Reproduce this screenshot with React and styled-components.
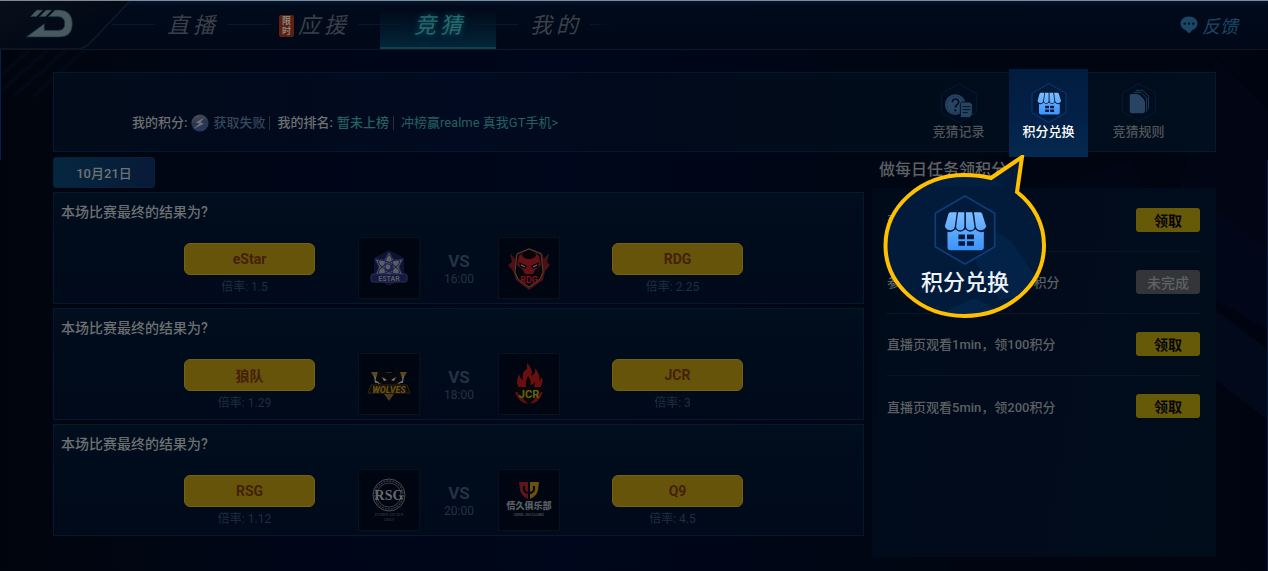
import React, { useState } from 'react';
import styled, { createGlobalStyle } from "styled-components";

const matches = [
    { id: 1, time: "16:00", home: "eStar", homeOdds: "1.5", away: "RDG", awayOdds: "2.25", homeLogo: EstarLogo, awayLogo: RdgLogo },
    { id: 2, time: "18:00", home: "狼队", homeOdds: "1.29", away: "JCR", awayOdds: "3", homeLogo: WolvesLogo, awayLogo: JcrLogo },
    { id: 3, time: "20:00", home: "RSG", homeOdds: "1.12", away: "Q9", awayOdds: "4.5", homeLogo: RsgLogo, awayLogo: QjLogo },
];

const tasks = [
    { id: 1, text: "登录领积分", done: true },
    { id: 2, text: "参与任意1次竞猜，领100积分", done: false },
    { id: 3, text: "直播页观看1min，领100积分", done: true },
    { id: 4, text: "直播页观看5min，领200积分", done: true },
];

const tabs = [
    { name: "直播" },
    { name: "应援", limited: true },
    { name: "竞猜" },
    { name: "我的" },
];

export default function App() {
    const [currentTab, setCurrentTab] = useState("竞猜");

    return <>
        <GlobalStyle />
        <Page>
            <Backdrop />
            <Header>
                <Brand href="#home" aria-label="首页">
                    <BrandLogo />
                </Brand>
                <Tabs>
                    {tabs.map((tab) => (
                        <Tab
                            key={tab.name}
                            $active={tab.name === currentTab}
                            onClick={() => setCurrentTab(tab.name)}
                        >
                            <TabLabel>
                                {tab.limited && <Limited><span>限</span><span>时</span></Limited>}
                                <span className="name">{tab.name}</span>
                            </TabLabel>
                        </Tab>
                    ))}
                </Tabs>
                <Feedback>
                    <FeedbackIcon />
                    反馈
                </Feedback>
            </Header>

            <Main>
                <Summary>
                    <Stats>
                        <span>我的积分:</span>
                        <PointsIcon />
                        <Muted>获取失败</Muted>
                        <Divider />
                        <span>我的排名:</span>
                        <Rank>暂未上榜</Rank>
                        <Divider />
                        <RankLink href="#rank">冲榜赢realme 真我GT手机&gt;</RankLink>
                    </Stats>
                    <QuickMenu>
                        <QuickItem>
                            <QuickButton><RecordIcon />竞猜记录</QuickButton>
                        </QuickItem>
                        <QuickItem>
                            <QuickButton $active><ShopIcon width="36" height="40" />积分兑换</QuickButton>
                            <Callout>
                                <CalloutShape />
                                <ShopIcon width="62" height="70" />
                                <span>积分兑换</span>
                            </Callout>
                        </QuickItem>
                        <QuickItem>
                            <QuickButton><RulesIcon />竞猜规则</QuickButton>
                        </QuickItem>
                    </QuickMenu>
                </Summary>

                <Columns>
                    <Schedule>
                        <DateTab>10月21日</DateTab>
                        {matches.map((match) => (
                            <MatchCard key={match.id}>
                                <h3>本场比赛最终的结果为?</h3>
                                <MatchBody>
                                    <Choice>
                                        <Bet>{match.home}</Bet>
                                        <Odds>倍率: {match.homeOdds}</Odds>
                                    </Choice>
                                    <TeamLogo><match.homeLogo /></TeamLogo>
                                    <Versus>
                                        <strong>VS</strong>
                                        <span>{match.time}</span>
                                    </Versus>
                                    <TeamLogo><match.awayLogo /></TeamLogo>
                                    <Choice>
                                        <Bet>{match.away}</Bet>
                                        <Odds>倍率: {match.awayOdds}</Odds>
                                    </Choice>
                                </MatchBody>
                            </MatchCard>
                        ))}
                    </Schedule>

                    <Daily>
                        <h2>做每日任务领积分</h2>
                        <TaskList>
                            {tasks.map((task) => (
                                <Task key={task.id}>
                                    <span>{task.text}</span>
                                    <Claim $done={task.done} disabled={!task.done}>
                                        {task.done ? "领取" : "未完成"}
                                    </Claim>
                                </Task>
                            ))}
                        </TaskList>
                    </Daily>
                </Columns>
            </Main>
        </Page>
    </>
}

function Backdrop() {
    return (
        <BackdropSvg viewBox="0 0 1268 571" preserveAspectRatio="none" aria-hidden="true">
            <g fill="#0a2a66">
                <path d="M1216 60 L1268 110 V250 L1180 180 Z" opacity="0.05" />
                <path d="M1180 180 L1268 250 V330 L1216 300 Z" opacity="0.1" />
                <path d="M1216 310 L1268 350 V420 L1216 380 Z" opacity="0.14" />
                <path d="M1040 190 L1130 160 L1180 260 L1100 300 Z" opacity="0.05" />
                <path d="M940 80 L1010 150 L920 250 Z" opacity="0.05" />
            </g>
            <g stroke="#0a2f5c" strokeWidth="4" opacity="0.1">
                <path d="M0 76 L30 50" />
                <path d="M0 92 L48 50" />
                <path d="M14 96 L66 50" />
                <path d="M34 96 L84 50" />
            </g>
            <path d="M0 2 V160" stroke="#04204a" strokeWidth="2" />
            <path d="M1268 160 V571" stroke="#031d4d" strokeWidth="2" />
        </BackdropSvg>
    )
}

function BrandLogo() {
    return (
        <svg width="132" height="50" viewBox="0 0 132 50" aria-hidden="true">
            <defs>
                <linearGradient id="brandBg" x1="0" y1="0" x2="1" y2="1">
                    <stop offset="0" stopColor="#090f1a" />
                    <stop offset="0.6" stopColor="#020916" />
                </linearGradient>
            </defs>
            <path d="M0 0 H130 L90 42 Q84 49 76 49 H0 Z" fill="url(#brandBg)" />
            <path d="M130 0 L90 42 Q84 48 76 48 H0" fill="none" stroke="#101a26" strokeWidth="1.5" />
            <g transform="scale(0.3333)" fill="#4a5860" stroke="#0d3442" strokeWidth="2">
                <path d="M110 27 H129 L109 47 H91 Z" />
                <path d="M138 27 H156 L136 47 H118 Z" />
                <path d="M165 27 H178 Q217 29 217 68 Q217 108 178 108 H79 L133 68 V88 H176 Q194 87 194 68 Q194 48 176 47 H145 Z" />
            </g>
        </svg>
    )
}

function FeedbackIcon() {
    return (
        <svg width="18" height="18" viewBox="0 0 18 18" aria-hidden="true">
            <path d="M9 0.5 C14 0.5 17.5 3.5 17.5 7.5 C17.5 11 15 13 12.5 14 L9 17.5 L5.5 14 C3 13 0.5 11 0.5 7.5 C0.5 3.5 4 0.5 9 0.5 Z" fill="#1b4766" />
            <g fill="#020a18">
                <circle cx="4.8" cy="7.6" r="1.2" />
                <circle cx="9" cy="7.6" r="1.2" />
                <circle cx="13.2" cy="7.6" r="1.2" />
            </g>
        </svg>
    )
}

function PointsIcon() {
    return (
        <svg width="18" height="18" viewBox="0 0 18 18" aria-hidden="true">
            <defs>
                <linearGradient id="points" x1="0.3" y1="0" x2="0.6" y2="1">
                    <stop offset="0" stopColor="#4c4f56" />
                    <stop offset="0.5" stopColor="#2a364f" />
                    <stop offset="1" stopColor="#253861" />
                </linearGradient>
            </defs>
            <circle cx="9" cy="9" r="8.6" fill="url(#points)" />
            <path d="M13.5 3.5 L4.5 8.5 L8.5 9.5 L2 15 L13 9.8 L9.5 8.6 Z" fill="#6f7379" />
        </svg>
    )
}

function ShopIcon({ width, height }) {
    return (
        <svg width={width} height={height} viewBox="0 0 186 212" aria-hidden="true">
            <defs>
                <linearGradient id="shop" gradientUnits="userSpaceOnUse" x1="0" y1="52" x2="0" y2="167">
                    <stop offset="0" stopColor="#7dbdff" />
                    <stop offset="1" stopColor="#3b94fb" />
                </linearGradient>
            </defs>
            <path d="M93 3 L183 55 V157 L93 209 L3 157 V55 Z" fill="#021a3c" stroke="#0f3d77" strokeWidth="5" />
            <g fill="url(#shop)">
                <path d="M49 52 H68 L62 97 Q58 108 47 107 Q35 106 32 95 L43 57 Q45 52 49 52 Z" />
                <path d="M72 52 H91 V97 Q88 108 78 107 Q68 107 66 97 Z" />
                <path d="M96 52 H115 L122 97 Q120 107 110 107 Q99 108 96 97 Z" />
                <path d="M120 52 H139 Q143 52 145 57 L157 95 Q154 106 142 107 Q130 108 126 97 Z" />
                <path fillRule="evenodd" d="M40 111 Q54 116 64 104 Q78 119 94 104 Q109 119 124 104 Q134 116 150 111 V158 Q150 167 141 167 H49 Q40 167 40 158 Z M73 120 V134 H93 V120 Z M99 120 V134 H120 V120 Z M73 140 V154 H93 V140 Z M99 140 V154 H120 V140 Z" />
            </g>
        </svg>
    )
}

function RecordIcon() {
    return (
        <svg width="36" height="40" viewBox="0 0 108 120" aria-hidden="true">
            <path d="M54 2 L106 32 V90 L54 119 L2 90 V32 Z" fill="#010d1e" stroke="#061b30" strokeWidth="3" />
            <circle cx="43" cy="65" r="31" fill="#274562" />
            <circle cx="43" cy="65" r="26" fill="none" stroke="#152f4c" strokeWidth="2" />
            <path d="M34 58 Q34 48 43 48 Q53 48 53 57 Q53 62 47 66 Q43 69 43 74" fill="none" stroke="#041021" strokeWidth="5" />
            <circle cx="43" cy="82" r="3.5" fill="#041021" />
            <path d="M62 57 H87 L94 64 V94 L86 104 H58 V62 Z" fill="#274562" stroke="#041021" strokeWidth="3" />
            <path d="M65 71 H88 M65 80 H88 M65 89 H80" stroke="#041021" strokeWidth="3" />
        </svg>
    )
}

function RulesIcon() {
    return (
        <svg width="36" height="40" viewBox="0 0 108 120" aria-hidden="true">
            <path d="M54 2 L104 30 V86 L54 114 L4 86 V30 Z" fill="#010d1e" stroke="#061b30" strokeWidth="3" />
            <path d="M32 33 H50 L72 55 V84 Q72 91 65 91 H32 Q26 91 26 84 V39 Q26 33 32 33 Z" fill="#274562" />
            <path d="M54 34 L71 51 H54 Z" fill="#274562" />
            <path d="M38 28 H60 L77 45 V86 M44 22 H65 L83 40 V78" fill="none" stroke="#1f3b58" strokeWidth="3" />
        </svg>
    )
}

function CalloutShape() {
    return (
        <svg className="shape" width="164" height="164" viewBox="883 155 164 164" aria-hidden="true">
            <defs>
                <clipPath id="bubble">
                    <ellipse cx="964.5" cy="245.5" rx="79" ry="70.5" />
                </clipPath>
            </defs>
            <path
                d="M991 178 L1022 157 L1017 192 C1034 205 1044 224 1044 245.5 C1044 284.5 1008.5 316 964.5 316 C921 316 885.5 284.5 885.5 245.5 C885.5 206.5 921 175 964.5 175 C974 175 983 176 991 178 Z"
                fill="#021b3b"
            />
            <g clipPath="url(#bubble)">
                <path d="M985 225 L1010 240 L1045 290 L1000 300 L975 262 Z" fill="#04305f" opacity="0.35" />
                <path d="M930 318 L975 298 L1010 318 Z" fill="#04305f" opacity="0.4" />
                <path d="M885 175 H1045 V186 H885 Z" fill="#03234c" opacity="0.4" />
            </g>
            <path
                d="M991 178 L1022 157 L1017 192 C1034 205 1044 224 1044 245.5 C1044 284.5 1008.5 316 964.5 316 C921 316 885.5 284.5 885.5 245.5 C885.5 206.5 921 175 964.5 175 C974 175 983 176 991 178 Z"
                fill="none" stroke="#ffc000" strokeWidth="4"
            />
        </svg>
    )
}

function EstarLogo() {
    return (
        <svg width="60" height="60" viewBox="0 0 60 60" role="img" aria-label="eStar">
            <path d="M30 12 L45 20 V40 L30 48 L15 40 V20 Z" fill="#0e1430" />
            <path d="M30 14 L35 22 L44 21 L40 29 L44 38 L35 37 L30 45 L25 37 L16 38 L20 29 L16 21 L25 22 Z" fill="#5c5e64" stroke="#1b2350" />
            <ellipse cx="30" cy="29" rx="4" ry="12" fill="none" stroke="#1b2350" />
            <ellipse cx="30" cy="29" rx="4" ry="12" fill="none" stroke="#1b2350" transform="rotate(60 30 29)" />
            <ellipse cx="30" cy="29" rx="4" ry="12" fill="none" stroke="#1b2350" transform="rotate(-60 30 29)" />
            <circle cx="30" cy="30" r="4" fill="#1b2350" />
            <circle cx="29" cy="29" r="2.4" fill="#5c5e64" />
            <rect x="12" y="36" width="36" height="8" rx="2" fill="#121a40" stroke="#2c3150" />
            <text x="30" y="43" textAnchor="middle" fontFamily="Roboto, sans-serif" fontSize="7" fontWeight="700" fill="#5c5e66">ESTAR</text>
        </svg>
    )
}

function RdgLogo() {
    return (
        <svg width="60" height="60" viewBox="0 0 60 60" role="img" aria-label="RDG">
            <path d="M30 10 L43 15 L45 21 L50 15 L48 24 L51 27 L46 33 L44 42 L30 52 L17 42 L14 33 L9 27 L13 24 L11 15 L16 21 L18 15 Z" fill="#4d1016" />
            <path d="M30 11 L42 16 L44 34 L41 41 L30 49 L19 41 L16 34 L18 16 Z" fill="#08060a" stroke="#4f4530" />
            <path d="M20 18 Q30 8 40 18 L42 27 L36 32 L34 36 H26 L24 32 L18 27 Z" fill="#651118" />
            <ellipse cx="30" cy="17" rx="7" ry="4" fill="#050308" />
            <path d="M20 24 L28 28 L26 31 L21 29 Z M40 24 L32 28 L34 31 L39 29 Z" fill="#050308" />
            <path d="M22 27 L26 29 M38 27 L34 29" stroke="#8a8480" />
            <text x="30" y="45" textAnchor="middle" fontFamily="Roboto, sans-serif" fontSize="9" fontWeight="700" fill="#7c151d">RDG</text>
        </svg>
    )
}

function WolvesLogo() {
    return (
        <svg width="60" height="60" viewBox="0 0 60 60" role="img" aria-label="狼队">
            <path d="M12 18 H48 L41 30 H19 Z" fill="#5d4722" />
            <path d="M15 21 L21 29 H16 Z M45 21 L39 29 H44 Z" fill="#6c6e70" />
            <path d="M21 13 L27 19 H33 L39 13 L43 26 L37 30 H23 L17 26 Z" fill="#07080c" stroke="#07080c" />
            <path d="M23 23 L28 26 L25 27 Z M37 23 L32 26 L35 27 Z" fill="#77797c" />
            <path d="M12 31 L48 31 L51 39 H9 Z" fill="#0b0a0b" stroke="#33270f" />
            <text x="30" y="39" textAnchor="middle" fontFamily="Roboto, sans-serif" fontSize="9" fontWeight="900" fontStyle="italic" fill="#6b500f">WOLVES</text>
            <path d="M25 40 H35 L30 47 Z" fill="#4a3b1e" />
        </svg>
    )
}

function JcrLogo() {
    return (
        <svg width="60" height="60" viewBox="0 0 60 60" role="img" aria-label="JCR">
            <path d="M28 9 Q35 16 32 22 Q37 20 36 14 Q42 21 40 27 L43 23 Q45 31 39 36 H22 Q15 30 20 20 Q21 25 24 26 Q22 18 28 15 Z" fill="#690f0e" />
            <path d="M29 22 Q33 27 31 31 Q36 30 36 27 Q37 34 30 36 Q24 33 29 22 Z" fill="#08060a" />
            <path d="M16 38 Q20 50 30 50 Q40 50 44 38 Z" fill="#5c100e" />
            <path d="M12 33 H48 L41 39 L30 51 L19 39 Z" fill="#07080a" />
            <text x="30" y="44" textAnchor="middle" fontFamily="Roboto, sans-serif" fontSize="11" fontWeight="700" fill="#66640e">JCR</text>
        </svg>
    )
}

function RsgLogo() {
    return (
        <svg width="60" height="60" viewBox="0 0 60 60" role="img" aria-label="RSG">
            <circle cx="30" cy="25" r="16" fill="none" stroke="#4b4e53" />
            <circle cx="30" cy="25" r="12" fill="none" stroke="#4b4e53" strokeWidth="0.8" />
            <circle cx="30" cy="25" r="14" fill="none" stroke="#34383e" strokeWidth="1.4" strokeDasharray="2 1" />
            <text x="30" y="30" textAnchor="middle" fontFamily="'Liberation Serif', serif" fontSize="14" fontWeight="700" fill="#66696d">RSG</text>
            <text x="30" y="46" textAnchor="middle" fontFamily="'Liberation Serif', serif" fontSize="4" fill="#3c4046">DOMINANCEIN</text>
            <text x="30" y="51" textAnchor="middle" fontFamily="'Liberation Serif', serif" fontSize="3" fill="#3c4046">GROUP</text>
        </svg>
    )
}

function QjLogo() {
    return (
        <svg width="60" height="60" viewBox="0 0 60 60" role="img" aria-label="Q9">
            <path d="M20 12 H29 V29 Q22 26 21 20 Z" fill="#5e141b" />
            <path d="M31 12 H40 L39 20 Q38 26 31 29 Z" fill="#6c5010" />
            <path d="M25 16 V20 Q26 23 30 23 Q34 23 35 20 V16" fill="none" stroke="#050912" strokeWidth="2" />
            <text x="30" y="39" textAnchor="middle" fontFamily="'Noto Sans CJK SC', sans-serif" fontSize="9" fontWeight="900" fill="#5a5d61">情久俱乐部</text>
            <text x="30" y="46" textAnchor="middle" fontFamily="Roboto, sans-serif" fontSize="4" fontWeight="700" fill="#45494e">QING JIU CLUBZ</text>
        </svg>
    )
}

const GlobalStyle = createGlobalStyle`
    *{
        box-sizing:border-box;
    }
    body{
        margin:0;
        background-color:#00050f;
        font-family:Roboto, "Noto Sans CJK SC", sans-serif;
    }
    button{
        font-family:inherit;
        border:none;
        padding:0;
        background:none;
        cursor:pointer;
    }
    a{
        text-decoration:none;
    }
    h2,h3,ul{
        margin:0;
        padding:0;
        font-weight:500;
    }
    svg{
        display:block;
    }
`;

const Page = styled.div`
    position: relative;
    min-height: 100vh;
    padding-bottom: 12px;
    background: linear-gradient(90deg, #00050d 0%, #000618 25%, #00071c 45%, #000611 75%, #000410 100%);
`;

const BackdropSvg = styled.svg`
    position: absolute;
    inset: 0;
    width: 100%;
    height: 100%;
`;

const Header = styled.header`
    position: relative;
    display: flex;
    align-items: stretch;
    height: 50px;
    border-top: 1px solid #7f8990;
    border-bottom: 1px solid #0e1723;
    background: linear-gradient(180deg, #021430 0%, #010a1b 12%, #010918 100%);
`;

const Brand = styled.a`
    width: 112px;
    height: 48px;
`;

const Tabs = styled.nav`
    display: flex;
    flex: 1;
`;

const Tab = styled.button`
    display: flex;
    align-items: center;
    justify-content: space-between;
    min-width: 116px;
    color: ${({ $active }) => $active ? "#276a6f" : "#3a4049"};
    text-shadow: ${({ $active }) => $active ? "0 0 6px #0d5560" : "none"};
    background: ${({ $active }) => $active ? "linear-gradient(180deg, transparent 20%, #022538 100%)" : "none"};
    border-bottom: 2px solid ${({ $active }) => $active ? "#0b4350" : "transparent"};
    &::before,
    &::after{
        content:"";
        width:22px;
        height:1px;
        background-color:#0d1723;
    }
    &:first-child{
        min-width:137px;
    }
    &:first-child::before{
        width:43px;
    }
    &:last-child::after{
        width:22px;
        background:linear-gradient(90deg, #0d1723, transparent);
    }
`;

const TabLabel = styled.span`
    display: flex;
    align-items: center;
    gap: 4px;
    padding: 4px 8px 0 12px;
    .name{
        font-size:22px;
        line-height:30px;
        font-style:italic;
        letter-spacing:4px;
    }
`;

const Limited = styled.span`
    display: flex;
    flex-direction: column;
    align-items: center;
    width: 15px;
    padding: 1px 0;
    margin-left: -4px;
    border-radius: 2px;
    background-color: #5c2013;
    color: #8c8078;
    font-size: 9px;
    line-height: 10px;
    font-weight: 700;
`;

const Feedback = styled.button`
    display: flex;
    align-items: center;
    gap: 4px;
    padding-right: 30px;
    color: #1b4766;
    font-size: 18px;
    font-style: italic;
`;

const Main = styled.main`
    position: relative;
    padding: 22px 52px 0 53px;
`;

const Summary = styled.section`
    display: flex;
    align-items: center;
    justify-content: space-between;
    height: 80px;
    padding: 0 37px 0 78px;
    border: 1px solid #031a2e;
    background: linear-gradient(90deg, #010b19 0%, #010a20 35%, #010b1a 60%, #010e1d 100%);
`;

const Stats = styled.div`
    display: flex;
    align-items: center;
    gap: 4px;
    padding-top: 22px;
    color: #6d6f72;
    font-size: 13px;
    line-height: 20px;
    font-weight: 500;
`;

const Muted = styled.span`
    color: #36465c;
`;

const Divider = styled.i`
    width: 1px;
    height: 14px;
    margin-right: 3px;
    background-color: #2b2f37;
`;

const Rank = styled.span`
    color: #256062;
`;

const RankLink = styled.a`
    color: #256062;
    font-weight: 400;
`;

const QuickMenu = styled.div`
    display: flex;
    gap: 11px;
    margin: -3px 0 -5px;
`;

const QuickItem = styled.div`
    position: relative;
`;

const QuickButton = styled.button`
    display: flex;
    flex-direction: column;
    align-items: center;
    width: 79px;
    height: 88px;
    padding-top: 14px;
    color: ${({ $active }) => $active ? "#ffffff" : "#505459"};
    background: ${({ $active }) => $active ? "linear-gradient(180deg, #021c3e 0%, #032047 50%, #04294f 100%)" : "none"};
    font-size: 13px;
    line-height: 18px;
    font-weight: 500;
`;

/* speech bubble hanging under the exchange button */
const Callout = styled.div`
    position: absolute;
    top: 86px;
    left: -126px;
    z-index: 2;
    display: flex;
    flex-direction: column;
    align-items: center;
    width: 164px;
    height: 164px;
    padding-top: 40px;
    .shape{
        position:absolute;
        inset:0;
    }
    svg{
        position:relative;
    }
    span{
        position:relative;
        margin-top:2px;
        color:#eef3f8;
        font-size:22px;
        line-height:32px;
        font-weight:500;
    }
`;

const Columns = styled.div`
    display: grid;
    grid-template-columns: minmax(0, 1fr) 344px;
    gap: 8px;
    align-items: start;
`;

const Schedule = styled.section`
    display: flex;
    flex-direction: column;
    gap: 4px;
    padding-top: 5px;
`;

const DateTab = styled.button`
    width: 102px;
    height: 31px;
    border: 1px solid #06223a;
    border-radius: 3px;
    background: linear-gradient(90deg, #052740, #081a38);
    color: #6d7377;
    font-size: 13px;
    font-weight: 500;
`;

const MatchCard = styled.article`
    height: 112px;
    border: 1px solid #021a2b;
    background: linear-gradient(180deg, #010e1d 0%, #000b1b 40%, #000a1b 100%);
    h3{
        padding:0 7px;
        color:#6d7072;
        font-size:14px;
        line-height:38px;
    }
`;

const MatchBody = styled.div`
    display: grid;
    grid-template-columns: 174px 62px 78px 114px 131px;
    justify-content: center;
    padding: 6px 0 0 10px;
`;

const Choice = styled.div`
    display: flex;
    flex-direction: column;
    width: 131px;
    padding-top: 6px;
`;

const Bet = styled.button`
    height: 32px;
    border: 1px solid #75610f;
    border-radius: 6px;
    background-color: #66540b;
    color: #45200a;
    font-size: 14px;
    font-weight: 700;
`;

const Odds = styled.span`
    padding: 2px 10px 0 0;
    color: #1f2f3f;
    font-size: 12px;
    line-height: 20px;
    text-align: center;
`;

const TeamLogo = styled.div`
    width: 62px;
    height: 62px;
    border: 1px solid #07121e;
    background-color: #000611;
`;

const Versus = styled.div`
    display: flex;
    flex-direction: column;
    align-items: center;
    padding-top: 14px;
    color: #243342;
    strong{
        font-size:17px;
        line-height:20px;
    }
    span{
        font-size:12px;
        line-height:16px;
    }
`;

const Daily = styled.section`
    h2{
        padding-left:7px;
        color:#5f6264;
        font-size:16px;
        line-height:36px;
    }
`;

const TaskList = styled.ul`
    min-height: 369px;
    padding: 2px 16px 0 15px;
    list-style: none;
    background: linear-gradient(100deg, #000b1a 0%, #010b1c 50%, #010d1b 100%);
`;

const Task = styled.li`
    display: flex;
    align-items: center;
    justify-content: space-between;
    height: 62px;
    padding-bottom: 2px;
    border-bottom: 1px solid #0b1824;
    color: #5c6063;
    font-size: 13px;
    &:last-child{
        border-bottom:none;
    }
`;

const Claim = styled.button`
    width: 64px;
    height: 24px;
    border-radius: 3px;
    background-color: ${({ $done }) => $done ? "#665a09" : "#333538"};
    color: ${({ $done }) => $done ? "#050503" : "#5f6163"};
    font-size: 14px;
    font-weight: ${({ $done }) => $done ? 700 : 500};
`;
